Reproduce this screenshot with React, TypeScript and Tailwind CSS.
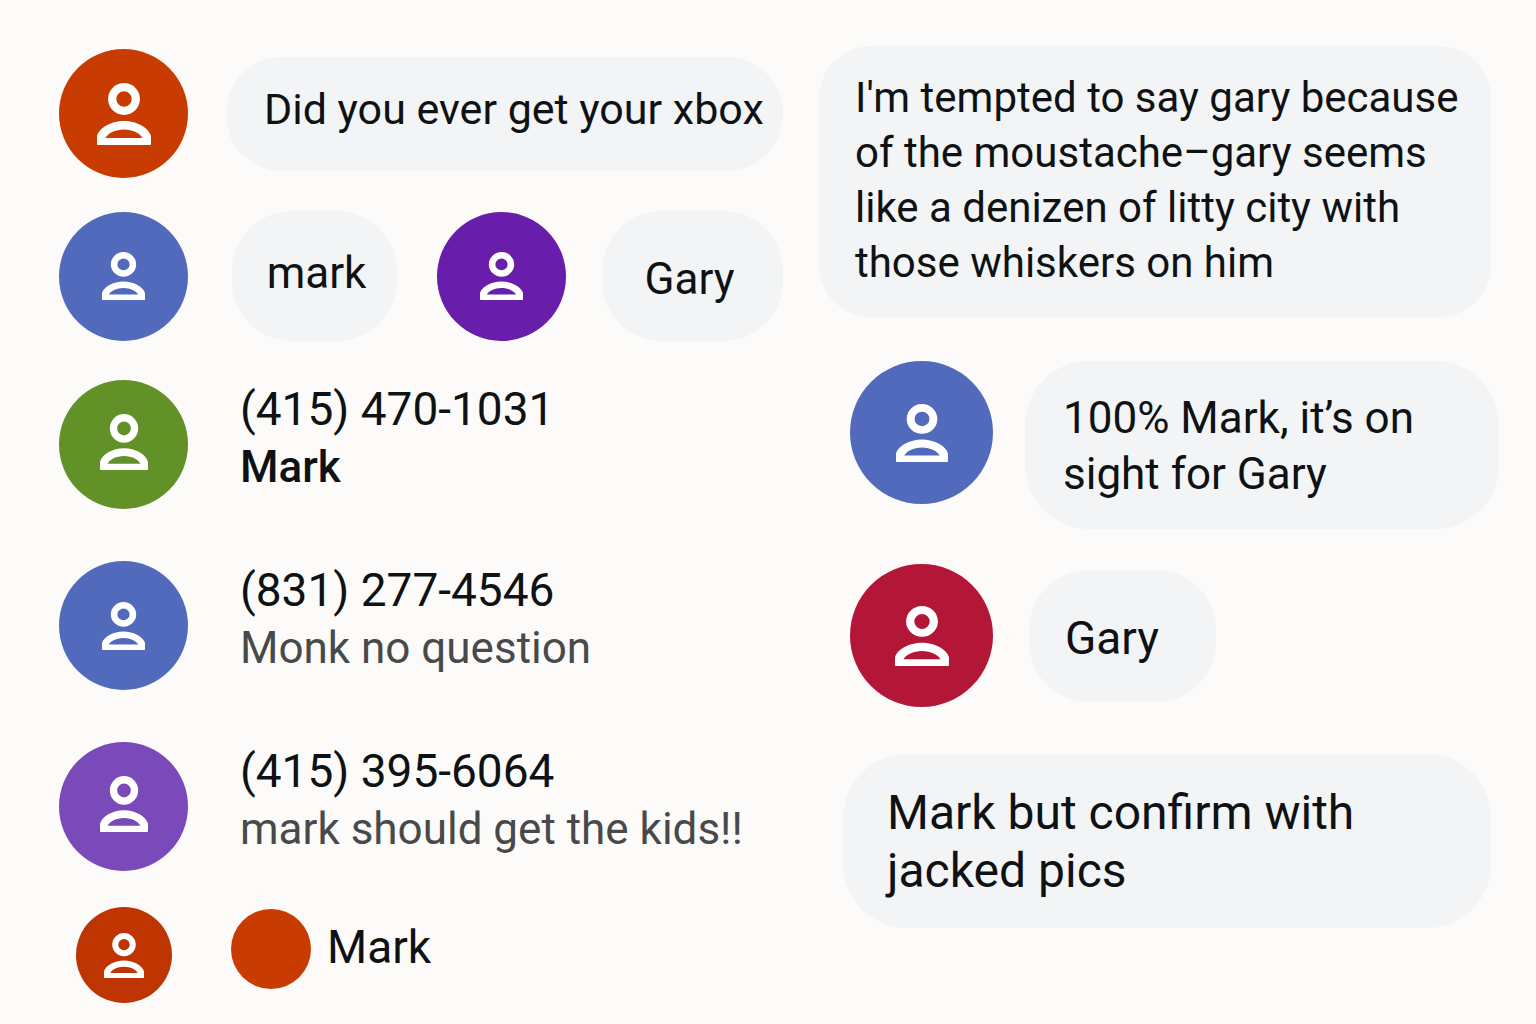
import React from "react";
import clsx from "clsx";

type AvatarProps = {
  color: string;
  size?: string;
  icon?: string;
};

const Person = ({ className }: { className: string }) => (
  <svg
    viewBox="0 0 54 62"
    preserveAspectRatio="none"
    className={className}
    fill="none"
    stroke="white"
    aria-hidden="true"
  >
    <circle cx="27" cy="16" r="11.8" strokeWidth="8.2" />
    <path
      fill="white"
      fillRule="evenodd"
      stroke="none"
      d="M1 62Q0 62 0 61V53C2 45 14 38 27 38S52 45 54 53V61Q54 62 53 62ZM8.500 55H45.500C43 50.500 36 46.500 27 46.500S11 50.500 8.500 55Z"
    />
  </svg>
);

const Avatar = ({ color, size = "size-[129px]", icon = "w-[43px] h-12" }: AvatarProps) => (
  <div
    className={clsx(
      "rounded-full shrink-0 flex justify-center items-center",
      size,
      color
    )}
  >
    <Person className={icon} />
  </div>
);

type BubbleProps = {
  className: string;
  children: React.ReactNode;
};

const Bubble = ({ className, children }: BubbleProps) => (
  <div className={clsx("bg-[#f3f4f5]", className)}>{children}</div>
);

const Contact = ({ phone, children }: { phone: string; children: React.ReactNode }) => (
  <div className="leading-[58px] whitespace-nowrap">
    <div className="text-[46px] leading-[58px]">{phone}</div>
    <div className="text-[44px] leading-[58px]">{children}</div>
  </div>
);

const App = () => {
  return (
    <main className="min-h-screen w-full bg-[#fcfbf9] text-[#0f1214] font-['Roboto',sans-serif] grid grid-cols-[724fr_672fr] gap-9 pl-[59px] pr-[45px] pb-5">
      <section className="min-w-0 pt-[49px]">
        <div className="flex items-center gap-[38px]">
          <Avatar color="bg-[#c83c02]" icon="w-[54px] h-[62px]" />
          <Bubble className="flex-1 min-w-0 rounded-[56px] h-[114px] pl-[38px] pb-2 flex items-center text-[43px] whitespace-nowrap">
            Did you ever get your xbox
          </Bubble>
        </div>

        <div className="mt-[33px] flex items-center">
          <Avatar color="bg-[#526abc]" />
          <Bubble className="ml-11 mr-10 rounded-[60px] h-[130px] w-[165px] pb-1.5 pl-1 flex justify-center items-center text-[44px]">
            mark
          </Bubble>
          <Avatar color="bg-[#691dab]" />
          <Bubble className="ml-9 rounded-[60px] h-[130px] flex-1 pt-1.5 pr-1.5 flex justify-center items-center text-[44px]">
            Gary
          </Bubble>
        </div>

        <div className="mt-[39px] flex gap-[52px]">
          <Avatar color="bg-[#629127]" icon="w-12 h-14 mb-1.5" />
          <Contact phone="(415) 470-1031">
            <span className="font-medium">Mark</span>
          </Contact>
        </div>

        <div className="mt-[52px] flex gap-[52px]">
          <Avatar color="bg-[#526abc]" />
          <Contact phone="(831) 277-4546">
            <span className="text-[#48494b]">Monk no question</span>
          </Contact>
        </div>

        <div className="mt-[52px] flex gap-[52px]">
          <Avatar color="bg-[#7b4aba]" icon="w-12 h-14 mb-1.5" />
          <Contact phone="(415) 395-6064">
            <span className="text-[#48494b]">mark should get the kids!!</span>
          </Contact>
        </div>

        <div className="mt-9 pl-[17px] flex items-start">
          <Avatar color="bg-[#be3502]" size="size-24" icon="w-10 h-[45px]" />
          <div className="mt-0.5 ml-[59px] flex items-center gap-4">
            <div className="size-20 rounded-full bg-[#c83c02]" />
            <div className="pb-1 text-[46px]">Mark</div>
          </div>
        </div>
      </section>

      <section className="min-w-0 pt-[46px]">
        <Bubble className="rounded-[52px] pt-6 pb-[27px] pl-9 text-[42px] leading-[55px] whitespace-nowrap">
          I'm tempted to say gary because
          <br />
          of the moustache–gary seems
          <br />
          like a denizen of litty city with
          <br />
          those whiskers on him
        </Bubble>

        <div className="mt-11 pl-[31px] -mr-2 flex items-start gap-8">
          <Avatar color="bg-[#526abc]" size="size-[143px]" icon="w-[52px] h-[58px]" />
          <Bubble className="flex-1 rounded-[64px] pt-[29px] pb-[27px] pl-[38px] text-[44px] leading-[56px] whitespace-nowrap">
            100% Mark, it’s on
            <br />
            sight for Gary
          </Bubble>
        </div>

        <div className="mt-[35px] pl-[31px] flex items-center gap-9">
          <Avatar color="bg-[#b41638]" size="size-[143px]" icon="w-[54px] h-[60px]" />
          <Bubble className="rounded-[60px] h-[132px] w-[187px] pl-9 pt-1.5 flex items-center text-[46px]">
            Gary
          </Bubble>
        </div>

        <Bubble className="mt-[47px] ml-6 rounded-[64px] pt-[30px] pb-7 pl-11 text-[48px] leading-[58px] whitespace-nowrap">
          Mark but confirm with
          <br />
          jacked pics
        </Bubble>
      </section>
    </main>
  );
};

export default App;
